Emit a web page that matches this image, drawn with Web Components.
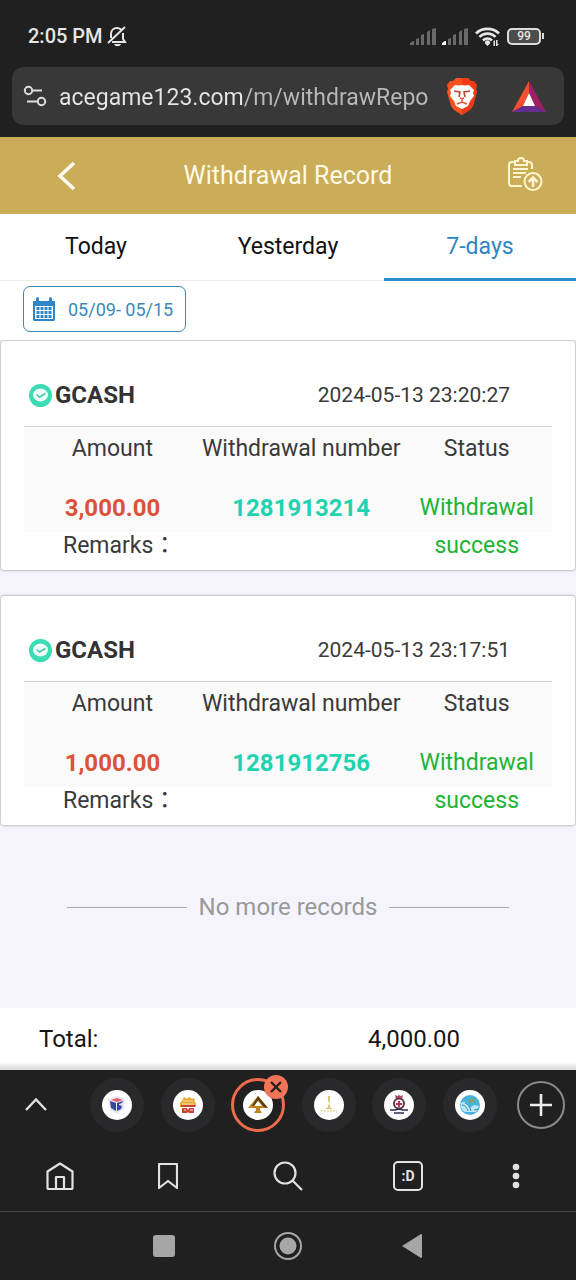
<!DOCTYPE html>
<html lang="en">
<head>
<meta charset="utf-8">
<meta name="viewport" content="width=device-width, initial-scale=1">
<title>Withdrawal Record</title>
<style>
  body {
    margin: 0;
    font-family: Roboto, "Noto Sans CJK TC", sans-serif;
    background: #202020;
  }
</style>
</head>
<body>
<record-app></record-app>

<script>
const RESET = `
  *, *::before, *::after { box-sizing: border-box; }
  svg { display: block; flex: none; }
  button {
    margin: 0;
    padding: 0;
    border: 0;
    background: none;
    color: inherit;
    font: inherit;
    cursor: pointer;
  }
`;

class BaseElement extends HTMLElement {
  constructor() {
    super();
    this.attachShadow({mode: 'open'});
  }

  connectedCallback() {
    this.render();
  }
}

class StatusBar extends BaseElement {
  render() {
    this.shadowRoot.innerHTML = `
      <style>
        ${RESET}
        :host {
          display: flex;
          align-items: center;
          justify-content: space-between;
          height: 67px;
          padding: 5px 32px 0 28px;
          color: #e6e6e6;
          font-size: 20px;
          font-weight: 500;
        }
        .group { display: flex; align-items: center; gap: 4px; }
        .signals { gap: 6px; }
        .battery { display: flex; align-items: center; gap: 1px; }
        .level {
          width: 34px;
          height: 17px;
          border: 2px solid #dcdcdc;
          border-radius: 5px;
          background: #4c4c4c;
          font-size: 12px;
          line-height: 13px;
          text-align: center;
        }
        .cap { width: 2px; height: 6px; background: #dcdcdc; }
      </style>
      <div class="group">
        <span>2:05 PM</span>
        <svg width="20" height="22" viewBox="0 0 20 22" fill="none" stroke="#e6e6e6" stroke-width="2">
          <path d="M5 17h13l-2-3V8M4 13V9c0-4 3-6 6-6 2 0 3 .6 4 1.500M1 18L18 2"/>
          <path fill="#e6e6e6" stroke="none" d="M7 19h7c-1 3-6 3-7 0z"/>
        </svg>
      </div>
      <div class="group signals">
        <svg width="26" height="17" viewBox="0 0 26 17" fill="#6a6a6a">
          <path d="M0 17v-2l3-2h1v4zM6 11l3-1v7H6zM11 7l3-1v11h-3zM17 4l3-2v15h-3zM22 1l4-1v17h-4z"/>
        </svg>
        <svg width="26" height="17" viewBox="0 0 26 17" fill="#6a6a6a">
          <path fill="#fff" d="M0 17v-2l3-2h1v4z"/>
          <path d="M6 11l3-1v7H6zM11 7l3-1v11h-3zM17 4l3-2v15h-3zM22 1l4-1v17h-4z"/>
        </svg>
        <svg width="27" height="19" viewBox="0 0 27 19" fill="none" stroke="#e6e6e6" stroke-width="2.600">
          <path d="M2 6.500C8 .3 19 .3 25 6.500M5.500 10c4-4.500 12-4.500 16 0M9 13.500c2.500-2.700 6.500-2.700 9 0"/>
          <path fill="#e6e6e6" stroke="none" d="M11 16.500a2.600 2.600 0 1 1 5 0L13.500 19zM19 15l2-2v6h-1.500v-4zM22 13h1.500v4H25l-2 2h-1z"/>
        </svg>
        <div class="battery"><div class="level">99</div><div class="cap"></div></div>
      </div>
    `;
  }
}

class AddressBar extends BaseElement {
  render() {
    this.shadowRoot.innerHTML = `
      <style>
        ${RESET}
        :host { display: block; padding: 0 12px 12px; }
        .field {
          display: flex;
          align-items: center;
          height: 58px;
          padding: 0 18px 0 11px;
          border-radius: 12px;
          background: #383838;
        }
        input {
          flex: 1;
          min-width: 0;
          height: 36px;
          margin: 0 14px 0 12px;
          padding: 2px 0 0;
          border: 0;
          outline: 0;
          font: 23px Roboto, sans-serif;
          color: #e0e0e0;
          /* host name is brighter than the path */
          background: linear-gradient(90deg, #e6e6e6 185px, #b9b9b9 185px);
          -webkit-background-clip: text;
          background-clip: text;
          -webkit-text-fill-color: transparent;
        }
        .shield { margin-right: 34px; }
      </style>
      <div class="field">
        <button aria-label="Site settings">
          <svg width="24" height="24" viewBox="0 0 24 24" fill="none" stroke="#dedede" stroke-width="2">
            <circle cx="5.500" cy="6.500" r="3.700"/><path d="M9 6.500h10M4 17.500h11"/><circle cx="18.500" cy="17.500" r="3.700"/>
          </svg>
        </button>
        <input type="text" aria-label="Address" value="acegame123.com/m/withdrawRepo">
        <button class="shield" aria-label="Shields">
          <svg width="32" height="38" viewBox="0 0 32 38">
            <path fill="#fb5121" d="M10 1h12l3 3h3l3 4-1 4 1 3-4 14-3 4-8 5-8-5-3-4L1 15l1-3-1-4 3-4h3z"/>
            <path fill="#e3250f" d="M16 1h6l3 3h3l3 4-1 4 1 3-4 14-3 4-8 5z" opacity=".5"/>
            <path fill="#fff" d="M9 8l4 .5L16 8l3 .500L23 8l5 5-1 3 1 3-4 5-2 5-6 3-6-3-2-5-4-5 1-3-1-3z"/>
            <path fill="none" stroke="#b5492f" stroke-width="1.600" d="M8 14l6 1-1 5M24 14l-6 1 1 5"/>
            <path fill="none" stroke="#e8502d" stroke-width="1.500" d="M14 21l2 1 2-1M16 22v3M11 27l5-2 5 2"/>
          </svg>
        </button>
        <button aria-label="Rewards">
          <svg width="34" height="31" viewBox="0 0 34 31">
            <path fill="#f4502f" d="M17 0v12L11 25 0 31z"/>
            <path fill="#9e1f63" d="M17 0l17 31-11-6-6-13z"/>
            <path fill="#662d91" d="M0 31l11-6h12l11 6z"/>
            <path fill="#fff" d="M17 12l6 13H11z"/>
          </svg>
        </button>
      </div>
    `;
  }
}

class PageHeader extends BaseElement {
  render() {
    this.shadowRoot.innerHTML = `
      <style>
        ${RESET}
        :host {
          display: grid;
          grid-template-columns: 132px 1fr 132px;
          align-items: center;
          height: 77px;
          background: #cbac59;
          color: #fffbe6;
        }
        button { justify-self: center; }
        .history { justify-self: end; margin: 0 33px 4px 0; }
        h1 { margin: 0; font-size: 25px; font-weight: 400; text-align: center; }
      </style>
      <button aria-label="Back">
        <svg width="20" height="30" viewBox="0 0 20 30" fill="none" stroke="#fffdf2" stroke-width="3.500">
          <path d="M18 2L4 15l14 13"/>
        </svg>
      </button>
      <h1><slot></slot></h1>
      <button class="history" aria-label="Withdrawal history">
        <svg width="36" height="38" viewBox="0 0 36 38" fill="none" stroke="#fff6cf" stroke-width="2">
          <path d="M7 7H5a3 3 0 0 0-3 3v18a3 3 0 0 0 3 3h10M20 7h2a3 3 0 0 1 3 3v4M8 10h12V6h-3a3 3 0 0 0-6 0H8zM6 14h15M6 18h13M6 22h8"/>
          <circle cx="26" cy="26.500" r="8.500"/><path d="M26 32v-9M21.500 27l4.500-4.500 4.500 4.500" stroke-width="2.600"/>
        </svg>
      </button>
    `;
  }
}

class PeriodTabs extends BaseElement {
  render() {
    const active = this.getAttribute('active');
    const labels = this.getAttribute('labels').split(',');
    this.shadowRoot.innerHTML = `
      <style>
        ${RESET}
        :host { display: block; background: #fff; }
        .tabs { display: flex; }
        button {
          flex: 1;
          height: 67px;
          padding-bottom: 2px;
          border-bottom: 1px solid #ebebeb;
          font-size: 23px;
          color: #111;
        }
        button[aria-selected="true"] { border-bottom: 3px solid #2b8bc8; padding-bottom: 0; color: #2f87c0; }
      </style>
      <div class="tabs" role="tablist">
        ${labels.map(label => `
          <button role="tab" aria-selected="${label === active}">${label}</button>
        `).join('')}
      </div>
    `;
  }
}

class DateRange extends BaseElement {
  render() {
    this.shadowRoot.innerHTML = `
      <style>
        ${RESET}
        :host { display: block; padding: 5px 23px 8px; background: #fff; }
        button {
          display: flex;
          align-items: center;
          gap: 13px;
          height: 46px;
          padding: 0 12px 0 9px;
          border: 1px solid #3a88b4;
          border-radius: 7px;
          font-size: 18px;
          color: #3a88bd;
        }
      </style>
      <button>
        <svg width="22" height="24" viewBox="0 0 22 24">
          <path fill="#2f86c6" d="M0 4h3V1l2-1 1 1v3h10V1l1-1 2 1v3h3v19l-1 1H1l-1-1z"/>
          <path fill="#fff" d="M2 9h18v13H2z"/>
          <path fill="none" stroke="#2f86c6" stroke-width="3" stroke-dasharray="3 1" d="M3.500 11.500h15M3.500 15.500h15M3.500 19.500h15"/>
        </svg>
        <slot></slot>
      </button>
    `;
  }
}

class RecordCard extends BaseElement {
  render() {
    const get = name => this.getAttribute(name);
    this.shadowRoot.innerHTML = `
      <style>
        ${RESET}
        :host {
          display: block;
          margin: 0 1px;
          padding: 35px 23px 5px;
          border-radius: 3px;
          background: #fff;
          box-shadow: 0 0 3px rgba(0, 0, 0, .45);
          color: #3a3a3a;
          font-size: 23px;
          line-height: 38px;
        }
        header {
          display: flex;
          align-items: center;
          gap: 3px;
          padding: 0 42px 12px 5px;
          border-bottom: 1px solid #d5d5d5;
        }
        h2 { flex: 1; margin: 0; font-size: 24px; font-weight: 700; color: #333; }
        time { font-size: 21px; }
        table {
          width: 100%;
          table-layout: fixed;
          border-collapse: collapse;
          text-align: center;
          background: linear-gradient(#fafafa, #fafafa) no-repeat 0 0 / 100% 105px;
        }
        th { padding: 3px 0 0; font-weight: 400; white-space: nowrap; }
        td { padding: 0; vertical-align: top; }
        .values td { padding-top: 21px; }
        .amount, .number { font-size: 24px; font-weight: 700; }
        .values .amount { color: #dc5239; }
        .values .number { color: #1fd3b0; }
        .values .status { color: #20b434; }
        .remarks { text-align: left; padding-left: 39px; }
      </style>
      <header>
        <svg width="23" height="23" viewBox="0 0 23 23">
          <circle cx="11.500" cy="11.500" r="11.500" fill="#3bdcb2"/>
          <ellipse cx="11.500" cy="11" rx="7.500" ry="6.500" fill="#eefcf8"/>
          <path d="M7.500 10.500l3 2.500 6-3.500" fill="none" stroke="#43c9a8" stroke-width="1.500"/>
        </svg>
        <h2>${get('method')}</h2>
        <time>${get('time')}</time>
      </header>
      <table>
        <colgroup><col style="width: 33.5%"><col style="width: 38%"><col style="width: 28.5%"></colgroup>
        <thead>
          <tr><th>Amount</th><th>Withdrawal number</th><th>Status</th></tr>
        </thead>
        <tbody>
          <tr class="values">
            <td class="amount">${get('amount')}</td>
            <td class="number">${get('number')}</td>
            <td class="status" rowspan="2">${get('status')}</td>
          </tr>
          <tr><td class="remarks" colspan="2">Remarks：</td></tr>
        </tbody>
      </table>
    `;
  }
}

class EndNote extends BaseElement {
  render() {
    this.shadowRoot.innerHTML = `
      <style>
        ${RESET}
        :host {
          display: flex;
          align-items: center;
          gap: 12px;
          padding: 67px 67px 0;
          color: #999;
          font-size: 24px;
          line-height: 30px;
        }
        :host::before, :host::after { content: ""; flex: 1; height: 1px; background: #aaa; }
      </style>
      <slot></slot>
    `;
  }
}

class TotalBar extends BaseElement {
  render() {
    this.shadowRoot.innerHTML = `
      <style>
        ${RESET}
        :host {
          display: flex;
          align-items: center;
          height: 62px;
          padding-left: 39px;
          background: linear-gradient(#fff 54px, #d8d8d8);
          color: #161616;
          font-size: 24px;
        }
        span { flex: 1; }
        output { width: 324px; text-align: center; }
      </style>
      <span>Total:</span>
      <output><slot></slot></output>
    `;
  }
}

const FAVICONS = {
  cube: `<path fill="#e4e4f2" d="M6 9l9-3 8 3-1 10-7 5-7-4z"/><path fill="#34479c" d="M8 11l6 2v8l-5-3z"/><path fill="#e5606b" d="M9 10l6-2 6 2-6 2z"/>
    <path fill="#34479c" d="M15 13l6-2-1 2-3 1v1l3 1-1 3-4 2z"/>`,
  crown: `<path fill="#e8a72c" d="M9 11l2-4 3 2 2-2 3 2 2-1 1 5h1v4H7v-4z"/>
    <path fill="#c5453a" d="M8 15h14v2H8zM9 18h5l1 2 1-2h5v5h-5l-1-1-1 1H9z"/><path stroke="#fbe3b0" d="M10 11h10M9 14h12M11 20h2M17 20h3" fill="none"/>`,
  spade: `<path fill="#bd8420" fill-rule="evenodd" d="M15 6L5 18h8v2l-2 3h8l-2-3v-2h8zM15 11l4 5h-8z"/><path fill="#5d3d0d" d="M15 6l10 12-4-1-6-7-4 6H9z"/>`,
  tower: `<path fill="#dcc375" d="M14 6h2v5l-1 2 2 6h-4l2-6-1-2zM12 18h6v1h-6z"/><path stroke="#dcc375" stroke-dasharray="2 1" d="M7 21h16"/>`,
  badge: `<path fill="#b04a5e" d="M11 5l2 1 2-1 2 1 2-1-1 4h-6z"/><circle cx="15" cy="13.500" r="5" fill="#fff" stroke="#6b3050" stroke-width="2"/>
    <path fill="#b9314a" d="M14 11h2v2h2v2h-2v2h-2v-2h-2v-2h2z"/><path fill="none" stroke="#2c2f4c" stroke-width="1.500" d="M6 20l5 0 4-1 4 1 5 0M10 23h10"/>`,
  wave: `<circle cx="15" cy="15" r="10" fill="#48b3db"/><path fill="#bfe8f7" d="M6 13c4-3 8 2 9 5l4-3 5 1-3 6H10c-3-2-5-5-4-9z"/>
    <path fill="none" stroke="#278bbb" d="M7 15c3 0 5 3 6 6M10 13c3 1 5 4 6 8M19 20l4-1"/><path fill="#8ba14c" d="M13 9l4 1 4-2-2 3 2 2-4-1-2 1z"/>`,
};

class SiteTab extends BaseElement {
  render() {
    const active = this.hasAttribute('active');
    this.shadowRoot.innerHTML = `
      <style>
        ${RESET}
        :host { display: flex; flex: 1; justify-content: center; }
        .wrap { position: relative; }
        .tab {
          display: grid;
          place-items: center;
          width: 54px;
          height: 54px;
          border-radius: 50%;
          background: #29292b;
        }
        :host([active]) .tab { border: 3px solid #ee6b4d; background: none; }
        .close { position: absolute; top: -3px; right: -3px; }
      </style>
      <div class="wrap">
        <button class="tab" aria-label="Tab">
          <svg width="30" height="30" viewBox="0 0 30 30">
            <circle cx="15" cy="15" r="15" fill="#fff"/>${FAVICONS[this.getAttribute('icon')]}
          </svg>
        </button>
        ${active ? `
          <button class="close" aria-label="Close tab">
            <svg width="24" height="24" viewBox="0 0 24 24">
              <circle cx="12" cy="12" r="12" fill="#f47458"/>
              <path d="M7 7l10 10M17 7L7 17" stroke="#272020" stroke-width="2.400"/>
            </svg>
          </button>` : ''}
      </div>
    `;
  }
}

class TabStrip extends BaseElement {
  render() {
    this.shadowRoot.innerHTML = `
      <style>
        ${RESET}
        :host { display: flex; align-items: center; height: 70px; }
        .expand { display: flex; justify-content: center; width: 72px; margin-right: 10px; }
        .new {
          display: grid;
          place-items: center;
          width: 48px;
          height: 48px;
          margin: 0 11px 0 12px;
          border: 2px solid #8a8a8a;
          border-radius: 50%;
        }
      </style>
      <button class="expand" aria-label="Expand tabs">
        <svg width="22" height="14" viewBox="0 0 22 14" fill="none" stroke="#e0e0e0" stroke-width="2.400">
          <path d="M1 12L11 1.500 21 12"/>
        </svg>
      </button>
      <slot></slot>
      <button class="new" aria-label="New tab">
        <svg width="22" height="22" viewBox="0 0 22 22" stroke="#ececec" stroke-width="2.600"><path d="M11 0v22M0 11h22"/></svg>
      </button>
    `;
  }
}

class BrowserToolbar extends BaseElement {
  render() {
    this.shadowRoot.innerHTML = `
      <style>
        ${RESET}
        :host {
          display: grid;
          grid-template-columns: 5fr 4fr 6fr 4fr 5fr;
          align-items: center;
          justify-items: center;
          height: 72px;
          border-bottom: 1px solid #4a4a4a;
          color: #e2e2e2;
        }
        svg { fill: none; stroke: currentColor; stroke-width: 2.200; }
        .count {
          width: 30px;
          height: 30px;
          border: 2px solid #e2e2e2;
          border-radius: 5px;
          font-size: 14px;
          font-weight: 700;
          line-height: 24px;
        }
      </style>
      <button aria-label="Home">
        <svg width="28" height="28" viewBox="0 0 28 28"><path stroke-linejoin="round" d="M1.500 9.500L14 1.500l12.500 8V26a1 1 0 0 1-1 1h-23a1 1 0 0 1-1-1zM10 27V15h8v12"/></svg>
      </button>
      <button aria-label="Bookmarks">
        <svg width="20" height="28" viewBox="0 0 20 28"><path stroke-linejoin="round" d="M1 2h18v24l-9-7-9 7z"/></svg>
      </button>
      <button aria-label="Search">
        <svg width="30" height="30" viewBox="0 0 30 30"><circle cx="12" cy="12" r="10.500"/><path d="M19.500 19.500L29 29"/></svg>
      </button>
      <button class="count" aria-label="Open tabs">:D</button>
      <button aria-label="Menu">
        <svg width="8" height="26" viewBox="0 0 8 26"><g fill="currentColor" stroke="none"><circle cx="4" cy="4" r="3.300"/><circle cx="4" cy="13" r="3.300"/><circle cx="4" cy="22" r="3.300"/></g></svg>
      </button>
    `;
  }
}

class SystemNav extends BaseElement {
  render() {
    this.shadowRoot.innerHTML = `
      <style>
        ${RESET}
        :host { display: flex; align-items: center; justify-content: center; gap: 96px; height: 68px; }
      </style>
      <button aria-label="Recent apps">
        <svg width="28" height="28" viewBox="0 0 28 28"><rect x="3" y="3" width="22" height="22" rx="3" fill="#a6a6a6"/></svg>
      </button>
      <button aria-label="Home screen">
        <svg width="28" height="28" viewBox="0 0 28 28" fill="#a6a6a6"><circle cx="14" cy="14" r="13" fill="none" stroke="#a6a6a6" stroke-width="2"/><circle cx="14" cy="14" r="8.500"/></svg>
      </button>
      <button aria-label="Back">
        <svg width="28" height="28" viewBox="0 0 28 28" fill="#a6a6a6"><path d="M4 14L23 2q1 0 1 1v22q0 1-1 1z"/></svg>
      </button>
    `;
  }
}

class RecordApp extends BaseElement {
  render() {
    this.shadowRoot.innerHTML = `
      <style>
        ${RESET}
        :host { display: flex; flex-direction: column; min-height: 100vh; }
        main {
          display: flex;
          flex: 1;
          flex-direction: column;
          background: #f5f4fc;
        }
        .records { display: flex; flex: 1; flex-direction: column; overflow: hidden; padding-top: 1px; }
        record-card + record-card { margin-top: 26px; }
      </style>
      <status-bar></status-bar>
      <address-bar></address-bar>
      <page-header>Withdrawal Record</page-header>
      <main>
        <period-tabs labels="Today,Yesterday,7-days" active="7-days"></period-tabs>
        <date-range>05/09- 05/15</date-range>
        <div class="records">
          <record-card method="GCASH" time="2024-05-13 23:20:27" amount="3,000.00"
            number="1281913214" status="Withdrawal success"></record-card>
          <record-card method="GCASH" time="2024-05-13 23:17:51" amount="1,000.00"
            number="1281912756" status="Withdrawal success"></record-card>
          <end-note>No more records</end-note>
        </div>
        <total-bar>4,000.00</total-bar>
      </main>
      <tab-strip>
        <site-tab icon="cube"></site-tab>
        <site-tab icon="crown"></site-tab>
        <site-tab icon="spade" active></site-tab>
        <site-tab icon="tower"></site-tab>
        <site-tab icon="badge"></site-tab>
        <site-tab icon="wave"></site-tab>
      </tab-strip>
      <browser-toolbar></browser-toolbar>
      <system-nav></system-nav>
    `;
  }
}

customElements.define('status-bar', StatusBar);
customElements.define('address-bar', AddressBar);
customElements.define('page-header', PageHeader);
customElements.define('period-tabs', PeriodTabs);
customElements.define('date-range', DateRange);
customElements.define('record-card', RecordCard);
customElements.define('end-note', EndNote);
customElements.define('total-bar', TotalBar);
customElements.define('site-tab', SiteTab);
customElements.define('tab-strip', TabStrip);
customElements.define('browser-toolbar', BrowserToolbar);
customElements.define('system-nav', SystemNav);
customElements.define('record-app', RecordApp);
</script>
</body>
</html>
